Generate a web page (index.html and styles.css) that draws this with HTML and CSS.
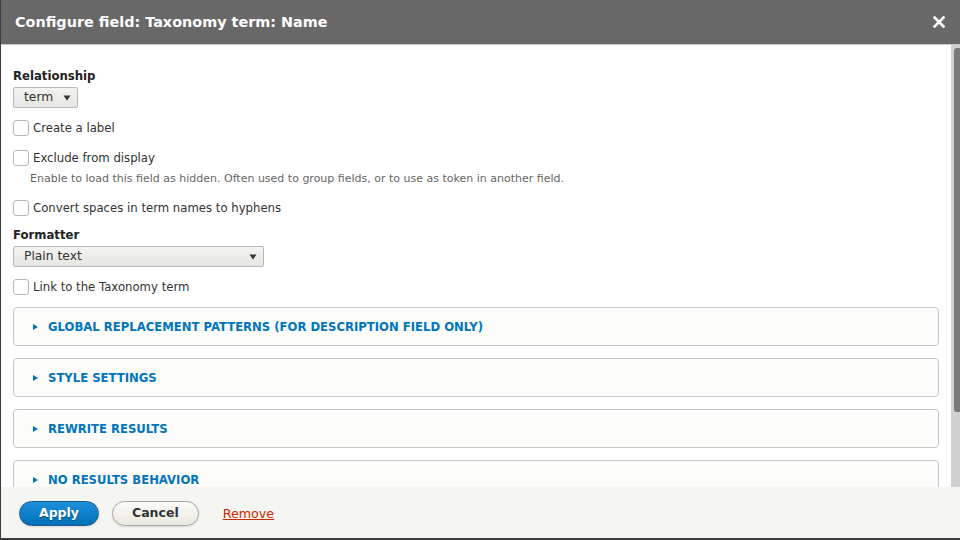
FILE: index.html
```html
<!DOCTYPE html>
<html>
<head>
<meta charset="utf-8">
<link rel="stylesheet" href="styles.css">
</head>
<body>
<div class="dialog">
  <div class="titlebar">
    <span class="title">Configure field: Taxonomy term: Name</span>
    <span class="close">
      <svg width="12" height="12" viewBox="0 0 12 12"><path d="M1.5 1.5 L10.5 10.5 M10.5 1.5 L1.5 10.5" stroke="#fff" stroke-width="2.6" stroke-linecap="square"/></svg>
    </span>
  </div>
  <div class="body">
    <div class="content">
      <div class="label">Relationship</div>
      <div class="select select-small">
        <span>term</span>
        <svg class="arrow" width="8" height="6" viewBox="0 0 8 6"><path d="M0.5 0.5 H7.5 L4 5.5 Z" fill="#333"/></svg>
      </div>
      <div class="check first"><span class="box"></span><span>Create a label</span></div>
      <div class="check mid"><span class="box"></span><span>Exclude from display</span></div>
      <div class="desc">Enable to load this field as hidden. Often used to group fields, or to use as token in another field.</div>
      <div class="check after-desc"><span class="box"></span><span>Convert spaces in term names to hyphens</span></div>
      <div class="label label-2">Formatter</div>
      <div class="select select-wide">
        <span>Plain text</span>
        <svg class="arrow" width="8" height="6" viewBox="0 0 8 6"><path d="M0.5 0.5 H7.5 L4 5.5 Z" fill="#333"/></svg>
      </div>
      <div class="check first"><span class="box"></span><span>Link to the Taxonomy term</span></div>
      <div class="details first-details"><span class="tri"></span><span>Global replacement patterns (for description field only)</span></div>
      <div class="details"><span class="tri"></span><span>Style settings</span></div>
      <div class="details"><span class="tri"></span><span>Rewrite results</span></div>
      <div class="details"><span class="tri"></span><span>No results behavior</span></div>
    </div>
    <div class="scrollbar"><div class="thumb"></div></div>
  </div>
  <div class="footer">
    <button class="btn primary">Apply</button>
    <button class="btn">Cancel</button>
    <a class="remove" href="#">Remove</a>
  </div>
</div>
</body>
</html>
```

FILE: styles.css
```css
html, body {
  margin: 0;
  padding: 0;
  width: 960px;
  height: 540px;
  overflow: hidden;
  background: #3c3c3c;
  font-family: "DejaVu Sans", sans-serif;
  color: #222;
}

.dialog {
  margin-left: 1px;
  width: 959px;
  height: 538px;
  display: flex;
  flex-direction: column;
  background: #fff;
}

.titlebar {
  height: 44px;
  background: #686868;
  border-bottom: 1px solid #c8c8c8;
  display: flex;
  align-items: center;
  justify-content: space-between;
  padding: 0 15px 0 14px;
  flex: none;
}

.title {
  color: #fff;
  font-weight: bold;
  font-size: 14.4px;
  margin-top: -1px;
}

.close {
  display: flex;
  margin-top: -1px;
}

.body {
  flex: 1;
  display: flex;
  min-height: 0;
}

.content {
  flex: 1;
  overflow: hidden;
  padding: 22px 12px 0 12px;
  font-size: 11.7px;
}

.scrollbar {
  width: 9px;
  flex: none;
  background: #d0d0d0;
  padding-top: 3px;
  display: flex;
  justify-content: flex-end;
}

.thumb {
  width: 6px;
  height: 364px;
  background: #777a7a;
  border-radius: 3px 0 0 3px;
}

.label {
  font-weight: bold;
  line-height: 18px;
  height: 18px;
}

.label-2 {
  margin-top: 10px;
}

.select {
  margin-top: 2px;
  height: 21px;
  box-sizing: border-box;
  border: 1px solid #b8b8b8;
  border-radius: 2px;
  background: linear-gradient(#f3f3f1, #e6e6e2);
  display: flex;
  align-items: center;
  justify-content: space-between;
  padding: 0 6px 0 10px;
  font-size: 12.3px;
  line-height: 19px;
  color: #333;
}

.select-small {
  width: 65px;
}

.select-wide {
  width: 251px;
}

.arrow {
  flex: none;
  margin-top: 1px;
}

.check {
  display: flex;
  align-items: center;
  height: 16px;
  line-height: 16px;
  color: #333;
}

.check.first {
  margin-top: 12px;
}

.check.mid {
  margin-top: 14px;
}

.check.after-desc {
  margin-top: 13px;
}

.box {
  width: 14px;
  height: 14px;
  border: 1px solid #b8b8b8;
  border-radius: 3px;
  background: #fff;
  margin-right: 4px;
  flex: none;
}

.desc {
  margin-top: 5px;
  margin-left: 17px;
  font-size: 11px;
  line-height: 16px;
  color: #666;
}

.details {
  margin-top: 12px;
  height: 37px;
  border: 1px solid #c8c8c8;
  border-radius: 4px;
  background: #fcfcfa;
  display: flex;
  align-items: center;
  padding-left: 19px;
  color: #0074bd;
  font-weight: bold;
  font-size: 11.65px;
  text-transform: uppercase;
}

.details.first-details {
  margin-top: 12px;
}

.tri {
  width: 0;
  height: 0;
  border-left: 5px solid #0074bd;
  border-top: 3.5px solid transparent;
  border-bottom: 3.5px solid transparent;
  margin-right: 10px;
}

.footer {
  flex: none;
  height: 51px;
  background: #f5f5f2;
  display: flex;
  align-items: center;
  padding-left: 18px;
  gap: 13px;
}

.btn {
  font-family: "DejaVu Sans", sans-serif;
  font-weight: bold;
  font-size: 12.5px;
  line-height: 16px;
  height: 25px;
  padding: 0 19px;
  border-radius: 13px;
  border: 1px solid #a6a6a6;
  background: linear-gradient(#fcfcfa, #e9e9dd);
  color: #333;
  margin-top: 1px;
  box-shadow: 0 1px 2px rgba(0,0,0,0.12);
}

.btn.primary {
  width: 80px;
  padding: 0;
  border-color: #1e5c90;
  background: linear-gradient(#1d8fdb, #0071b8);
  color: #fff;
  text-shadow: 0 1px 1px rgba(0,0,0,0.4);
}

.remove {
  margin-left: 11px;
  font-size: 12.7px;
  color: #c72b00;
  text-decoration: underline;
  margin-top: 2px;
}
```
